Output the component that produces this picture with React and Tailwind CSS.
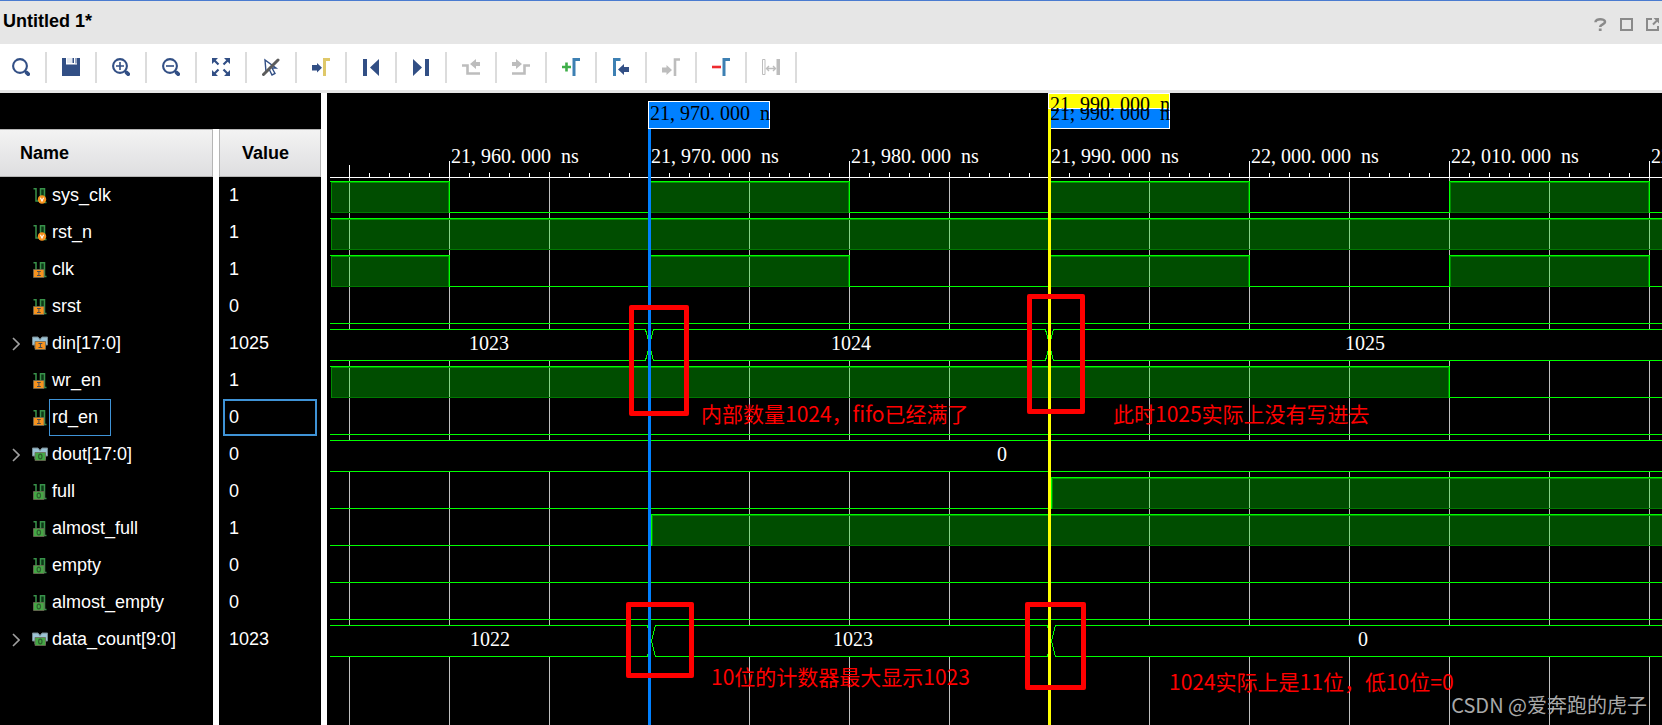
import React, { useState } from "react";

const NAVY = "#324f85";
const STEEL = "#3d80b3";
const MUTED = "#bdbdbd";

// ==================== TOOLBAR ICONS ====================
const Icon = ({ children }) => (
  <svg width="18" height="18" viewBox="0 0 18 18" fill="none" aria-hidden="true">
    {children}
  </svg>
);

const Lens = ({ children }) => (
  <Icon>
    <circle cx="8" cy="8" r="6.9" stroke={NAVY} strokeWidth="2.1" />
    <path d="M13 13l1.2 1.2" stroke={NAVY} strokeWidth="2" />
    <path d="M14.600 14.600l1.600 1.600" stroke={NAVY} strokeWidth="3.8" strokeLinecap="round" />
    {children}
  </Icon>
);

const tools = [
  { label: "Search", icon: <Lens /> },
  {
    label: "Save",
    icon: (
      <Icon>
        <path d="M0 0h18v18H0z" fill={NAVY} />
        <path d="M4 0h11v6.500H4z" fill="#fff" />
        <path d="M5 0h5.500v5H5z" fill="#e3e8f0" />
        <path d="M10.500 0h1.500v5h-1.500zM13.500 0h1v5.500h-1z" fill={NAVY} />
      </Icon>
    ),
  },
  {
    label: "Zoom in",
    icon: (
      <Lens>
        <path d="M8 4v8M4 8h8" stroke={NAVY} strokeWidth="1.6" />
      </Lens>
    ),
  },
  {
    label: "Zoom out",
    icon: (
      <Lens>
        <path d="M4 8h8" stroke={NAVY} strokeWidth="1.6" />
      </Lens>
    ),
  },
  {
    label: "Zoom fit",
    icon: (
      <Icon>
        <path d="M0 0h6L0 6zM18 0v6l-6-6zM0 18v-6l6 6zM18 18h-6l6-6z" fill={NAVY} />
        <path d="M2 2l4.500 4.500M16 2l-4.500 4.500M2 16l4.500-4.500M16 16l-4.500-4.500" stroke={NAVY} strokeWidth="2.2" />
      </Icon>
    ),
  },
  {
    label: "Disable cursor",
    icon: (
      <Icon>
        <path d="M3 2l1 12 3-3 3 6 3-1.500-3-5.500h4z" stroke={NAVY} strokeWidth="1.4" />
        <path d="M1.500 16.500L16 2" stroke="#5c5c5c" strokeWidth="3" strokeLinecap="round" />
      </Icon>
    ),
  },
  {
    label: "Go to cursor",
    icon: (
      <Icon>
        <path d="M0 7h5V5l5 4.800L5 14.500V12.500H0z" fill={NAVY} />
        <path d="M12.500 18V1.500H18" stroke="#dfc869" strokeWidth="3" />
      </Icon>
    ),
  },
  {
    label: "Previous transition",
    icon: (
      <Icon>
        <path d="M1 1h4v17H1zM17 1v17L8 9.500z" fill={NAVY} />
      </Icon>
    ),
  },
  {
    label: "Next transition",
    icon: (
      <Icon>
        <path d="M13 1h4v17h-4zM1 1v17l9-8.500z" fill={NAVY} />
      </Icon>
    ),
  },
  {
    label: "Previous edge",
    disabled: true,
    icon: (
      <Icon>
        <path d="M0 7.500h5.500v8H18" stroke={MUTED} strokeWidth="2.6" />
        <path d="M18 4h-4V1L8 6l6 5V8h4z" fill={MUTED} />
      </Icon>
    ),
  },
  {
    label: "Next edge",
    disabled: true,
    icon: (
      <Icon>
        <path d="M0 15.500h12.500v-8H18" stroke={MUTED} strokeWidth="2.6" />
        <path d="M0 4h4V1l6 5-6 5V8H0z" fill={MUTED} />
      </Icon>
    ),
  },
  {
    label: "Add marker",
    icon: (
      <Icon>
        <path d="M12 18V1.500h6" stroke={STEEL} strokeWidth="3" />
        <path d="M0 9h9M4.500 4.500v9" stroke="#3fae49" strokeWidth="2.600" />
      </Icon>
    ),
  },
  {
    label: "Previous marker",
    icon: (
      <Icon>
        <path d="M2.500 18V1.500h6" stroke={STEEL} strokeWidth="3" />
        <path d="M17 9h-5V6l-6 5.500 6 5.500v-3h5z" fill={NAVY} />
      </Icon>
    ),
  },
  {
    label: "Next marker",
    disabled: true,
    icon: (
      <Icon>
        <path d="M13 18V1.500h5" stroke={MUTED} strokeWidth="2.600" />
        <path d="M0 9.500h4.500V7l5.500 5-5.500 5v-2.500H0z" fill={MUTED} />
      </Icon>
    ),
  },
  {
    label: "Remove marker",
    icon: (
      <Icon>
        <path d="M12 18V1.500h6" stroke={STEEL} strokeWidth="3" />
        <path d="M0 9h9" stroke="#ee2b2f" strokeWidth="2.600" />
      </Icon>
    ),
  },
  {
    label: "Swap cursors",
    disabled: true,
    icon: (
      <Icon>
        <path d="M.5 1.500h2.500v15H.5z" stroke={MUTED} />
        <path d="M14.500 1h3.500v16h-3.500z" fill={MUTED} />
        <path d="M5 10.500h8M7 8l-2.500 2.500L7 13M11 8l2.500 2.500L11 13" stroke={MUTED} strokeWidth="1.4" />
      </Icon>
    ),
  },
];

// ==================== SIGNALS ====================
const signals = [
  { name: "sys_clk", value: "1", kind: "wire", wave: "clock" },
  { name: "rst_n", value: "1", kind: "wire", high: [[21950, 22100]] },
  { name: "clk", value: "1", kind: "in", wave: "clock" },
  { name: "srst", value: "0", kind: "in", high: [] },
  {
    name: "din[17:0]",
    value: "1025",
    kind: "busIn",
    edges: [21970, 21990],
    texts: [["1023", 162], ["1024", 524], ["1025", 1038]],
  },
  { name: "wr_en", value: "1", kind: "in", high: [[21950, 22010]] },
  { name: "rd_en", value: "0", kind: "in", high: [] },
  { name: "dout[17:0]", value: "0", kind: "busOut", edges: [], texts: [["0", 675]] },
  { name: "full", value: "0", kind: "out", high: [[21990.1, 22100]] },
  { name: "almost_full", value: "1", kind: "out", high: [[21970.1, 22100]] },
  { name: "empty", value: "0", kind: "out", high: [] },
  { name: "almost_empty", value: "0", kind: "out", high: [] },
  {
    name: "data_count[9:0]",
    value: "1023",
    kind: "busOut",
    edges: [21970.1, 21990.1],
    texts: [["1022", 163], ["1023", 526], ["0", 1036]],
  },
];

const clockHigh = [
  [21950, 21960],
  [21970, 21980],
  [21990, 22000],
  [22010, 22020],
];

const SignalIcon = ({ kind }) => {
  const isBus = kind === "busIn" || kind === "busOut";
  const isOut = kind === "out" || kind === "busOut";
  const fill = isOut ? "#45a745" : "#f7931e";
  return (
    <svg width="17" height="16" viewBox="0 0 17 16" fill="none" className="shrink-0" aria-hidden="true">
      {isBus ? (
        <path d="M.5 1h5.500l2 2.500L10 1h5.500v8h-2v3H3V9H.5z" fill="#9cc3d5" stroke="#75878f" />
      ) : (
        <>
          <path d="M8.500 1h4v12h-4z" fill="#0d3a17" />
          <path d="M1.500 .8H4V13h4.500V.8h4V14.500h2" stroke="#38924a" strokeWidth="1.5" />
        </>
      )}
      {kind === "wire" && (
        <>
          <circle cx="10" cy="11.500" r="4.200" fill="#f7931e" />
          <path d="M8.400 9.800l1.600 3.200 1.600-3.200" stroke="#fff" strokeWidth="1.1" />
        </>
      )}
      {kind !== "wire" && (
        <g transform={isBus ? "translate(1.500 -2)" : undefined}>
          <path d="M1.500 7.500h10.500v8H1.500z" fill={fill} stroke="#6d6a55" strokeWidth=".8" />
          {isOut ? (
            <ellipse cx="6.800" cy="11.500" rx="1.700" ry="2.300" stroke="#2d5f2d" strokeWidth="1.200" />
          ) : (
            <path d="M5 9.500h3.800M5 13.500h3.800M6.900 9.500v4" stroke="#4d4d4d" strokeWidth="1" />
          )}
        </g>
      )}
    </svg>
  );
};

const SignalTable = () => {
  const [selected, setSelected] = useState("rd_en");

  return (
    <section className="flex w-[321px] shrink-0 flex-col bg-black">
      <div className="h-9" />
      <table className="w-full table-fixed border-separate border-spacing-0">
        <thead>
          <tr className="text-left text-black">
            <th className="w-[213px] p-0">
              <div className="flex h-12 items-center border border-l-0 border-[#b5b5b5] bg-linear-to-b from-[#f3f3f3] to-[#dedee0] pl-5">
                Name
              </div>
            </th>
            <th className="border-l-6 border-white p-0">
              <div className="flex h-12 items-center border border-[#b5b5b5] bg-linear-to-b from-[#f3f3f3] to-[#dedee0] pl-[22px]">
                Value
              </div>
            </th>
          </tr>
        </thead>
        <tbody className="text-white">
          {signals.map((s) => (
            <tr key={s.name} onClick={() => setSelected(s.name)}>
              <td className="p-0">
                <div className="flex h-[37px] items-center">
                  <div className="flex w-8 shrink-0 justify-center">
                    {s.kind.startsWith("bus") && (
                      <button aria-label={`Expand ${s.name}`}>
                        <svg width="8" height="14" viewBox="0 0 8 14" fill="none">
                          <path d="M1 1l6 6-6 6" stroke="#a0a0a0" strokeWidth="1.600" />
                        </svg>
                      </button>
                    )}
                  </div>
                  <SignalIcon kind={s.kind} />
                  <span
                    className={`flex h-full items-center border pr-3 pb-0.5 pl-0.5 ${
                      selected === s.name ? "border-[#3f93d6]" : "border-transparent"
                    }`}
                  >
                    {s.name}
                  </span>
                </div>
              </td>
              <td className="border-l-6 border-white p-0">
                <div
                  className={`mx-1 flex h-[37px] items-center border-2 pb-0.5 pl-1 ${
                    selected === s.name ? "border-[#3f93d6]" : "border-transparent"
                  }`}
                >
                  {s.value}
                </div>
              </td>
            </tr>
          ))}
        </tbody>
      </table>
      {/* keeps the column divider going below the last row */}
      <div className="flex flex-1">
        <div className="w-[213px]" />
        <div className="w-1.5 bg-white" />
      </div>
    </section>
  );
};

// ==================== WAVEFORM ====================
const START = 3;
const LANE_TOP = 88;
const LANE_H = 31;
const PITCH = 37;
const END = 4000;

// 20px for each nanosecond
const xOf = (ns) => Math.round(22 + (ns - 21955) * 20);

const TimeText = ({ x, y, ns, fill, unit = "ns" }) => {
  const text = String(ns);
  return (
    <text y={y} fill={fill}>
      <tspan x={x}>{text.slice(0, 2)},</tspan>
      <tspan x={x + 30}>{text.slice(2)}.</tspan>
      <tspan x={x + 70}>000</tspan>
      <tspan x={x + 110}>{unit}</tspan>
    </text>
  );
};

const LogicLane = ({ top, high }) => {
  const bottom = top + LANE_H;
  return (
    <>
      <rect x={START} y={bottom} width={END} height="1" fill="#00ff00" />
      {high.map(([from, to]) => {
        const opensHere = xOf(from) < START;
        const x = Math.max(xOf(from), START + 1);
        const w = xOf(to) - x;
        const blankX = opensHere ? START : x;
        return (
          <g key={from}>
            <rect x={blankX} y={bottom} width={x + w - blankX} height="1" fill="#000" />
            <rect x={x} y={top + 1} width={w} height={LANE_H} fill="#00ff00" fillOpacity=".3" />
            <rect x={x} y={top + 1} width={w} height="1" fill="#009900" />
            <rect x={x} y={bottom} width={w} height="1" fill="#007800" />
            <rect x={opensHere ? x : x + 1} y={top + 1} width="1" height={LANE_H} fill="#008c00" />
            <rect x={x + w - 1} y={top + 1} width="1" height={LANE_H} fill="#008c00" />
            <rect x={blankX} y={top} width={x + w - blankX + 1} height="1" fill="#00ff00" />
            {!opensHere && <rect x={x} y={top} width="1" height={LANE_H + 1} fill="#00ff00" />}
            <rect x={x + w} y={top} width="1" height={LANE_H + 1} fill="#00ff00" />
          </g>
        );
      })}
    </>
  );
};

const BusLane = ({ top, edges, texts }) => {
  const stops = [START - 10, ...edges.map(xOf), END];
  const y1 = top + 0.5;
  const y2 = top + LANE_H + 0.5;
  const mid = top + 16;
  return (
    <>
      <rect x="0" y={top} width={END} height={LANE_H} fill="#000" />
      {stops.slice(0, -1).map((from, i) => {
        const a = from + 0.5;
        const b = stops[i + 1] + 0.5;
        return (
          <path
            key={from}
            d={`M${a} ${mid}L${a + 4} ${y1}H${b - 4}L${b} ${mid}L${b - 4} ${y2}H${a + 4}Z`}
            fill="none"
            stroke="#00ff00"
          />
        );
      })}
      <rect x="0" y={top} width={START} height={LANE_H + 1} fill="#000" />
      {texts.map(([text, x]) => (
        <text key={x} x={x} y={top + 21} fill="#fff" textAnchor="middle">
          {text}
        </text>
      ))}
    </>
  );
};

const gridLines = Array.from({ length: 40 }, (_, i) => 22 + i * 100);
const minorTicks = Array.from({ length: 200 }, (_, i) => 22 + i * 20);
const timeLabels = [21960, 21970, 21980, 21990, 22000, 22010, 22020];

const notes = [
  { text: "内部数量1024，fifo已经满了", place: "left-[374px] top-[305px]" },
  { text: "此时1025实际上没有写进去", place: "left-[786px] top-[305px]" },
  { text: "10位的计数器最大显示1023", place: "left-[384px] top-[568px]" },
  { text: "1024实际上是11位，低10位=0", place: "left-[842px] top-[573px]" },
];

const frames = [
  "left-[302px] top-[212px] h-[111px] w-[60px]",
  "left-[700px] top-[201px] h-[120px] w-[58px]",
  "left-[299px] top-[509px] h-[76px] w-[68px]",
  "left-[698px] top-[509px] h-[88px] w-[61px]",
];

const Waveform = () => (
  <section className="relative min-w-0 flex-1 overflow-hidden bg-black">
    <svg
      className="absolute inset-0 h-full w-full font-['Liberation_Serif',serif] text-[20px]"
      shapeRendering="crispEdges"
      role="img"
      aria-label="Waveform"
    >
      {/* grid */}
      {gridLines.map((x) => (
        <rect key={x} x={x} y="84" width="1" height="100%" fill="#c0c0c0" />
      ))}

      {/* ruler */}
      <rect x={START} y="84" width="100%" height="1" fill="#fff" />
      {minorTicks.map((x) => (
        <rect key={x} x={x} y="80" width="1" height="4" fill="#fff" />
      ))}
      {gridLines.map((x, i) => (
        <rect key={x} x={x} y={i === 0 ? 72 : 79} width="1" height={i === 0 ? 12 : 5} fill="#fff" />
      ))}
      {timeLabels.map((ns) => (
        <g key={ns}>
          <rect x={xOf(ns)} y="68" width="1" height="16" fill="#fff" />
          <TimeText x={xOf(ns) + 2} y={70} ns={ns} fill="#fff" />
        </g>
      ))}

      {/* lanes */}
      {signals.map((s, i) => {
        const top = LANE_TOP + i * PITCH;
        return s.edges ? (
          <BusLane key={s.name} top={top} edges={s.edges} texts={s.texts} />
        ) : (
          <LogicLane key={s.name} top={top} high={s.wave === "clock" ? clockHigh : s.high} />
        );
      })}

      {/* marker */}
      <rect x="321" y="36" width="3" height="100%" fill="#0080ff" />
      <rect x="321.5" y="8.5" width="121" height="27" fill="#0080ff" stroke="#fff" />
      <TimeText x={323} y={27} ns={21970} fill="#000" unit="n" />

      {/* main cursor, its flag lies over the second marker */}
      <rect x="721.5" y="8.5" width="121" height="27" fill="#0080ff" stroke="#fff" />
      <rect x="721.5" y=".5" width="121" height="15" fill="#ffff00" stroke="#fff" />
      <TimeText x={723} y={27} ns={21990} fill="#000" unit="n" />
      <rect x="722" y="1" width="120" height="14" fill="#ffff00" />
      <TimeText x={723} y={18} ns={21990} fill="#000" unit="n" />
      <rect x="721" y="16" width="3" height="100%" fill="#ffff00" />
    </svg>

    {frames.map((place) => (
      <div key={place} className={`absolute rounded-xs border-5 border-[#ff0000] ${place}`} />
    ))}
    {notes.map((n) => (
      <p
        key={n.text}
        className={`absolute font-['Noto_Sans_CJK_SC',sans-serif] text-[21px] leading-[30px] whitespace-nowrap text-[#ff0000] ${n.place}`}
      >
        {n.text}
      </p>
    ))}
    <p className="absolute right-[15px] bottom-[5px] font-['Noto_Sans_CJK_SC',sans-serif] text-[20px] leading-[30px] whitespace-nowrap text-[#a9a9a9]">
      CSDN @爱奔跑的虎子
    </p>
  </section>
);

export default function App() {
  return (
    <div className="flex min-h-screen flex-col overflow-hidden bg-white font-['Liberation_Sans',sans-serif] text-[18px] leading-6 text-black">
      {/* Title bar */}
      <header className="flex h-11 items-center justify-between border-t border-[#4a7bd0] bg-[#e6e6e6] px-[3px]">
        <h1 className="pb-1 font-bold">Untitled 1*</h1>
        <div className="flex items-center gap-[13px] pt-1">
          <button aria-label="Help">
            <svg width="13" height="13" viewBox="0 0 13 13" fill="none" stroke="#8a8a8a">
              <path d="M1.500 4.300C1.500 2 4 1.300 6.200 1.300S11 2 11 4c0 2.400-4.800 2.300-4.800 5" strokeWidth="2.600" />
              <path d="M6.200 10.500V13" strokeWidth="2.800" />
            </svg>
          </button>
          <button aria-label="Maximize">
            <svg width="13" height="13" viewBox="0 0 13 13" fill="none" stroke="#8a8a8a">
              <path d="M1 1h11v11H1z" strokeWidth="2" />
            </svg>
          </button>
          <button aria-label="Float">
            <svg width="13" height="13" viewBox="0 0 13 13" fill="none" stroke="#8a8a8a">
              <path d="M6 1H1v11h11V8" strokeWidth="2" />
              <path d="M7 6.500l4-4" strokeWidth="2" />
              <path d="M7.500 0H13v5.500z" fill="#8a8a8a" stroke="none" />
            </svg>
          </button>
        </div>
      </header>

      {/* Toolbar */}
      <div className="border-b-3 border-[#e6e6e6]">
        <nav className="-ml-[3px] flex h-[46px] items-center">
          {tools.map((t) => (
            <div key={t.label} className="flex h-[31px] shrink-0 border-r-2 border-[#dcdcdc]">
              <button
                aria-label={t.label}
                disabled={t.disabled}
                className="flex w-12 items-center justify-center"
              >
                {t.icon}
              </button>
            </div>
          ))}
        </nav>
      </div>

      <main className="flex flex-1">
        <SignalTable />
        <div className="w-1.5 shrink-0 bg-white" />
        <Waveform />
      </main>
    </div>
  );
}
